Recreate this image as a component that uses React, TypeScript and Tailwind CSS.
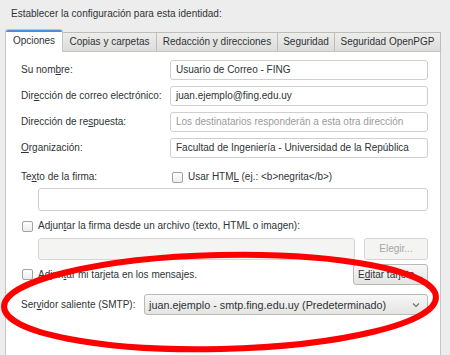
import type { ReactNode } from 'react'

// mnemonic underline helper: "Su nom_b_re"
function U({ children }: { children: ReactNode }) {
  return <span className="underline underline-offset-[1px]">{children}</span>
}

function Checkbox() {
  return (
    <span className="w-[11px] h-[11px] shrink-0 rounded-[2px] border border-[#a2a2a0] bg-gradient-to-b from-white to-[#ececec]" />
  )
}

function Input({ children, muted }: { children?: ReactNode; muted?: boolean }) {
  return (
    <div
      className={
        'h-[20px] flex items-center px-[5px] rounded-[3px] border border-[#cfcfcd] bg-white whitespace-nowrap overflow-hidden ' +
        (muted ? 'text-[#9a9c9c]' : 'text-[#2e3436]')
      }
    >
      {children}
    </div>
  )
}

function Button({ children, disabled, className = '' }: { children: ReactNode; disabled?: boolean; className?: string }) {
  return (
    <div
      className={
        'h-[21px] flex items-center justify-center rounded-[3px] border ' +
        (disabled
          ? 'border-[#d6d6d4] bg-[#f4f4f3] text-[#a5a7a7] '
          : 'border-[#b9b9b6] bg-gradient-to-b from-[#f7f7f7] to-[#e4e4e3] text-[#2e3436] ') +
        className
      }
    >
      {children}
    </div>
  )
}

const tabs = [
  { label: 'Copias y carpetas', w: 'w-[94px]' },
  { label: 'Redacción y direcciones', w: 'w-[121px]' },
  { label: 'Seguridad', w: 'w-[57px]' },
  { label: 'Seguridad OpenPGP', w: 'w-[106px]' },
]

export default function App() {
  return (
    <div className="relative w-[450px] h-[355px] overflow-hidden bg-[#ededed] text-[10px] leading-[12px] text-[#2e3436] font-['Liberation_Sans',Arial,sans-serif]">
      {/* Heading */}
      <div className="pl-[11px] pt-[8px] h-[28px]">Establecer la configuración para esta identidad:</div>

      {/* Tabs */}
      <div className="flex items-end pl-[5px] h-[23px]">
        <div className="w-[58px] h-[23px] -mb-px z-10 flex flex-col rounded-t-[3px] border border-b-0 border-[#c4c4c2] bg-white overflow-hidden">
          <div className="h-[2px] bg-[#4a90d9]" />
          <div className="flex-1 flex items-center justify-center pb-[2px]">Opciones</div>
        </div>
        {tabs.map(t => (
          <div
            key={t.label}
            className={
              t.w +
              ' h-[19px] flex items-center justify-center border border-l-0 border-b-0 border-[#bdbdbb] bg-gradient-to-b from-[#ededec] to-[#dcdcdb] whitespace-nowrap'
            }
          >
            {t.label}
          </div>
        ))}
      </div>

      {/* Page */}
      <div className="ml-[5px] w-[436px] h-[320px] border border-[#c4c4c2] bg-white pl-[15px] pr-[12px] pt-[8px]">
        <div className="grid grid-cols-[149px_258px] gap-y-[6px] items-center">
          <div>Su nom<U>b</U>re:</div>
          <Input>Usuario de Correo - FING</Input>
          <div>Dir<U>e</U>cción de correo electrónico:</div>
          <Input>juan.ejemplo@fing.edu.uy</Input>
          <div>Dirección de re<U>s</U>puesta:</div>
          <Input muted>Los destinatarios responderán a esta otra dirección</Input>
          <div><U>O</U>rganización:</div>
          <Input>Facultad de Ingeniería - Universidad de la República</Input>
        </div>

        <div className="grid grid-cols-[151px_256px] items-center mt-[13px]">
          <div>Te<U>x</U>to de la firma:</div>
          <div className="flex items-center gap-[5px]">
            <Checkbox />
            <span>Usar HTM<U>L</U> (ej.: &lt;b&gt;negrita&lt;/b&gt;)</span>
          </div>
        </div>

        <div className="ml-[17px] mt-[5px] h-[23px] rounded-[3px] border border-[#cfcfcd] bg-white" />

        <div className="flex items-center gap-[5px] mt-[9px] ml-[1px]">
          <Checkbox />
          <span>Adjun<U>t</U>ar la firma desde un archivo (texto, HTML o imagen):</span>
        </div>

        <div className="flex ml-[17px] mt-[6px] gap-[9px]">
          <div className="w-[317px] h-[22px] rounded-[3px] border border-[#d6d6d4] bg-[#f4f4f3]" />
          <Button disabled className="w-[64px] h-[22px]">Elegir...</Button>
        </div>

        <div className="flex items-center justify-between mt-[4px]">
          <div className="flex items-center gap-[5px] ml-[1px]">
            <Checkbox />
            <span>Adjun<U>t</U>ar mi tarjeta en los mensajes.</span>
          </div>
          <Button className="w-[75px] h-[21px]">E<U>d</U>itar tarjeta...</Button>
        </div>

        <div className="flex items-center mt-[9px]">
          <div className="w-[123px]">Ser<U>v</U>idor saliente (SMTP):</div>
          <div className="w-[284px] h-[21px] flex items-center justify-between pl-[4px] pr-[7px] rounded-[3px] border border-[#b9b9b6] bg-gradient-to-b from-[#f7f7f7] to-[#e4e4e3]">
            <span className="whitespace-nowrap text-[10.8px]">juan.ejemplo - smtp.fing.edu.uy (Predeterminado)</span>
            <svg width="8" height="6" viewBox="0 0 8 6" fill="none">
              <path d="M1 1.5l3 3 3-3" stroke="#6e7373" strokeWidth="1.2" />
            </svg>
          </div>
        </div>
      </div>

      {/* Red highlight ellipse drawn over the form */}
      <svg className="absolute inset-0 pointer-events-none" width="450" height="355" viewBox="0 0 450 355">
        <ellipse cx="220" cy="302" rx="216" ry="47" fill="none" stroke="#ff0000" strokeWidth="6" transform="rotate(-1.3 220 302)" />
      </svg>
    </div>
  )
}
